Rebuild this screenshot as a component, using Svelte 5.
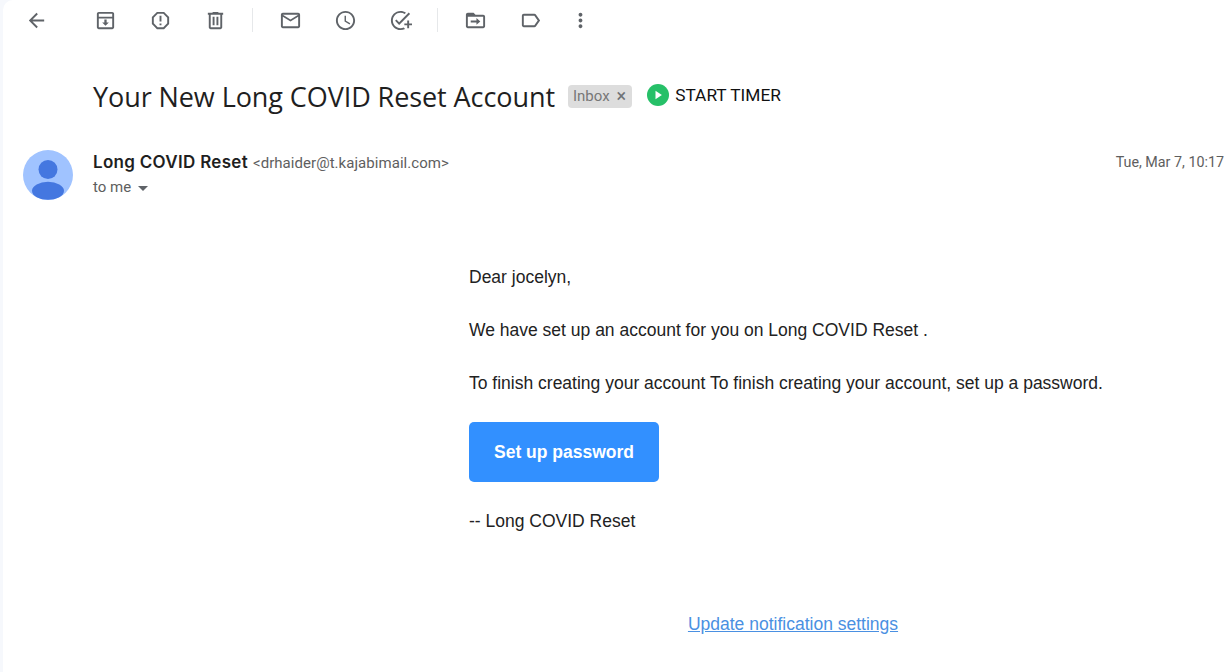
<script lang="ts">
  const groupA = [
    { name: 'archive', d: 'M19 3H5c-1.1 0-2 .9-2 2v14c0 1.1.9 2 2 2h14c1.1 0 2-.9 2-2V5c0-1.1-.9-2-2-2zM5 5h14v3H5V5zm0 14V10h14v9H5zm8.2-8h-2.4v3H8.5l3.5 3.5 3.5-3.5h-2.3v-3z' },
    { name: 'report', d: 'M15.73 3H8.27L3 8.27v7.46L8.27 21h7.46L21 15.73V8.27L15.73 3zM19 14.9L14.9 19H9.1L5 14.9V9.1L9.1 5h5.8L19 9.1v5.8zM11 7h2v6h-2zm0 8h2v2h-2z' },
    { name: 'delete', d: 'M15 4V3H9v1H4v2h1v13c0 1.1.9 2 2 2h10c1.1 0 2-.9 2-2V6h1V4h-5zm2 15H7V6h10v13zM9 8h2v9H9zm4 0h2v9h-2z' }
  ];
  const groupB = [
    { name: 'mail', d: 'M20 4H4c-1.1 0-2 .9-2 2v12c0 1.1.9 2 2 2h16c1.1 0 2-.9 2-2V6c0-1.1-.9-2-2-2zm0 14H4V8l8 5 8-5v10zm-8-7L4 6h16l-8 5z' },
    { name: 'snooze', d: 'M11.99 2C6.47 2 2 6.48 2 12s4.47 10 9.99 10C17.52 22 22 17.52 22 12S17.52 2 11.99 2zM12 20c-4.42 0-8-3.58-8-8s3.58-8 8-8 8 3.58 8 8-3.58 8-8 8zM12.5 7H11v6l5.25 3.15.75-1.23-4.5-2.67z' },
    { name: 'task', d: 'M22 5.18L10.59 16.6l-4.24-4.24 1.41-1.41 2.83 2.83 10-10L22 5.18zM12 20c-4.41 0-8-3.59-8-8s3.59-8 8-8c1.57 0 3.04.46 4.28 1.25l1.45-1.45C16.1 2.67 14.13 2 12 2 6.48 2 2 6.48 2 12s4.48 10 10 10c1.73 0 3.36-.44 4.78-1.22l-1.5-1.5c-1 .46-2.11.72-3.28.72zm7-5h-3v2h3v3h2v-3h3v-2h-3v-3h-2v3z' }
  ];
  const groupC = [
    { name: 'move', d: 'M20 6h-8l-2-2H4c-1.1 0-2 .9-2 2v12c0 1.1.9 2 2 2h16c1.1 0 2-.9 2-2V8c0-1.1-.9-2-2-2zm0 12H4V8h16v10zm-7-1.5l4-3.5-4-3.5V12H7v2h6v2.5z' },
    { name: 'label', d: 'M17.63 5.84C17.27 5.33 16.67 5 16 5L5 5.01C3.9 5.01 3 5.9 3 7v10c0 1.1.9 1.99 2 1.99L16 19c.67 0 1.27-.33 1.63-.84L22 12l-4.37-6.16zM16 17H5V7h11l3.55 5L16 17z' },
    { name: 'more', d: 'M12 8c1.1 0 2-.9 2-2s-.9-2-2-2-2 .9-2 2 .9 2 2 2zm0 2c-1.1 0-2 .9-2 2s.9 2 2 2 2-.9 2-2-.9-2-2-2zm0 6c-1.1 0-2 .9-2 2s.9 2 2 2 2-.9 2-2-.9-2-2-2z' }
  ];
</script>

<div class="page">
  <!-- toolbar -->
  <div class="toolbar">
    <button class="tool back" aria-label="back">
      <svg viewBox="0 0 24 24"><path d="M20 11H7.83l5.59-5.59L12 4l-8 8 8 8 1.41-1.41L7.83 13H20v-2z" /></svg>
    </button>
    <div class="group first">
      {#each groupA as icon}
        <button class="tool" aria-label={icon.name}><svg viewBox="0 0 24 24"><path d={icon.d} /></svg></button>
      {/each}
    </div>
    <span class="sep"></span>
    <div class="group">
      {#each groupB as icon}
        <button class="tool" aria-label={icon.name}><svg viewBox="0 0 24 24"><path d={icon.d} /></svg></button>
      {/each}
    </div>
    <span class="sep"></span>
    <div class="group last">
      {#each groupC as icon}
        <button class="tool" aria-label={icon.name}><svg viewBox="0 0 24 24"><path d={icon.d} /></svg></button>
      {/each}
    </div>
  </div>

  <!-- subject -->
  <div class="subject-row">
    <h1 class="subject">Your New Long COVID Reset Account</h1>
    <span class="chip">Inbox <span class="chip-x">×</span></span>
    <span class="timer">
      <svg class="play" viewBox="0 0 22 22"><circle cx="11" cy="11" r="11" fill="#26c068" /><path d="M8.5 6.8v8.4l6.4-4.2z" fill="#fff" /></svg>
      START TIMER
    </span>
  </div>

  <!-- sender -->
  <div class="sender-row">
    <svg class="avatar" viewBox="0 0 50 50">
      <circle cx="25" cy="25" r="25" fill="#a0c3ff" />
      <circle cx="25" cy="19.5" r="9.5" fill="#4477e0" />
      <ellipse cx="25" cy="40.8" rx="16" ry="9" fill="#4477e0" />
    </svg>
    <div class="sender-info">
      <div class="from"><span class="name">Long COVID Reset</span> <span class="addr">&lt;drhaider@t.kajabimail.com&gt;</span></div>
      <div class="to">to me <span class="caret"></span></div>
    </div>
    <div class="date">Tue, Mar 7, 10:17</div>
  </div>

  <!-- message body -->
  <div class="body">
    <p>Dear jocelyn,</p>
    <p>We have set up an account for you on Long COVID Reset .</p>
    <p>To finish creating your account To finish creating your account, set up a password.</p>
    <a class="cta" href="#top">Set up password</a>
    <p class="sign">-- Long COVID Reset</p>
    <div class="footer"><a href="#top">Update notification settings</a></div>
  </div>
</div>

<style>
  :global(body) {
    margin: 0;
    background: #f6f8fc;
  }

  .page {
    margin-left: 3px;
    height: 672px;
    overflow: hidden;
    background: #fff;
    border-top-left-radius: 10px;
    font-family: Roboto, 'Liberation Sans', sans-serif;
  }

  .toolbar {
    display: flex;
    align-items: center;
    height: 40px;
    padding-left: 13px;
  }

  .group {
    display: flex;
    gap: 15px;
  }
  .group.first { margin-left: 29px; }
  .group.last .tool:last-child { margin-left: -5px; }

  .tool {
    width: 40px;
    height: 40px;
    padding: 0;
    border: 0;
    background: none;
    display: flex;
    align-items: center;
    justify-content: center;
  }
  .tool svg {
    width: 23px;
    height: 23px;
    fill: #5f6368;
  }

  .sep {
    width: 1px;
    height: 24px;
    margin: 0 17px;
    background: #e6e8ea;
  }

  .subject-row {
    display: flex;
    align-items: center;
    margin-top: 36px;
    padding-left: 90px;
    height: 40px;
  }

  .subject {
    margin: 0;
    font-family: 'Open Sans', sans-serif;
    font-size: 27px;
    font-weight: 400;
    letter-spacing: -0.08px;
    color: #1f1f1f;
  }

  .chip {
    margin-left: 13px;
    height: 23px;
    padding: 0 6px 0 5px;
    display: flex;
    align-items: center;
    gap: 7px;
    border-radius: 4px;
    background: #dddddd;
    color: #777;
    font-size: 15px;
  }
  .chip-x { font-size: 18px; line-height: 1; color: #6f7276; }

  .timer {
    margin-left: 15px;
    display: flex;
    align-items: center;
    gap: 6px;
    font-size: 17.3px;
    color: #111;
    margin-top: -2px;
  }
  .play { width: 22px; height: 22px; }

  .sender-row {
    display: flex;
    align-items: flex-start;
    margin-top: 34px;
    padding-left: 20px;
  }

  .avatar {
    width: 50px;
    height: 50px;
    flex: none;
  }

  .sender-info {
    margin-left: 20px;
    flex: 1;
  }

  .from {
    line-height: 24px;
  }
  .name {
    font-family: Inter, sans-serif;
    font-size: 17px;
    font-weight: 600;
    letter-spacing: 0.3px;
    color: #1f1f1f;
  }
  .addr {
    margin-left: 1px;
    font-size: 15px;
    letter-spacing: 0.05px;
    color: #5e5e5e;
  }

  .to {
    font-size: 15px;
    line-height: 24px;
    color: #5e5e5e;
    display: flex;
    align-items: center;
    gap: 7px;
  }
  .caret {
    width: 0;
    height: 0;
    margin-top: 2px;
    border-left: 5px solid transparent;
    border-right: 5px solid transparent;
    border-top: 5px solid #5f6368;
  }

  .date {
    font-size: 14.3px;
    line-height: 24px;
    color: #5e5e5e;
  }

  .body {
    width: 648px;
    margin-left: 466px;
    margin-top: 65px;
    font-family: 'Liberation Sans', Arial, sans-serif;
    font-size: 17.5px;
    line-height: 24px;
    color: #222;
  }

  .body p {
    margin: 0 0 29px;
  }

  .cta {
    display: block;
    width: 190px;
    height: 60px;
    margin-top: -2px;
    border-radius: 5px;
    background: #3290ff;
    color: #fff;
    font-weight: 700;
    line-height: 60px;
    text-align: center;
    text-decoration: none;
  }

  .body p.sign {
    margin: 27px 0 0;
  }

  .footer {
    margin-top: 79px;
    text-align: center;
  }
  .footer a {
    color: #4a90e2;
  }
</style>
